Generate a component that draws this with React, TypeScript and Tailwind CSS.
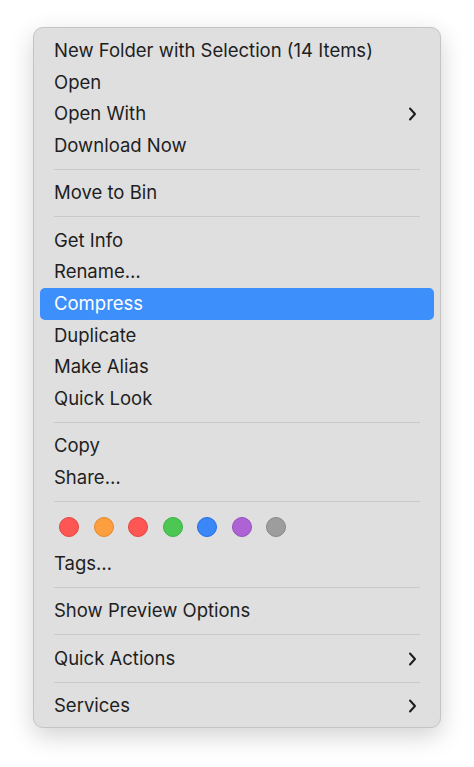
import React from "react";

type Item = { label: string; sub?: boolean; active?: boolean };

const Chevron = ({ white }: { white?: boolean }) => (
  <svg width="9" height="14" viewBox="0 0 9 14" className="absolute right-[17px] top-1/2 -translate-y-1/2">
    <path d="M2 1.5 L7 7 L2 12.5" fill="none" stroke={white ? "#fff" : "#1d1d1d"} strokeWidth="2" strokeLinecap="round" strokeLinejoin="round" />
  </svg>
);

const Row = ({ label, sub, active }: Item) => (
  <div
    className={
      "relative h-[31.6px] flex items-center pl-[14px] rounded-[5px] text-[18.5px] " +
      (active ? "bg-[#3d8ffb] text-white" : "text-[#1e1e1e]")
    }
  >
    <span>{label}</span>
    {sub && <Chevron white={active} />}
  </div>
);

const Sep = () => (
  <div className="h-[16px] flex items-center px-[14px]">
    <div className="h-px w-full bg-[#c9c9c9]" />
  </div>
);

const dots = [
  ["#fe5753", "#e0443f"],
  ["#fd9e3f", "#e8872a"],
  ["#fe5753", "#e0443f"],
  ["#4dc754", "#3bb043"],
  ["#3c87f7", "#1f6ee6"],
  ["#ad63d4", "#9650bd"],
  ["#9d9d9d", "#888888"],
];

export default function App() {
  return (
    <div className="min-h-screen bg-white pt-[27px] pl-[33px]" style={{ fontFamily: "Inter, 'Liberation Sans', sans-serif" }}>
      <div className="w-[408px] h-[701px] rounded-[10px] bg-[#dfdfdf] border border-[#c4c4c4] shadow-[0_8px_24px_rgba(0,0,0,0.18)] px-[6px] pt-[7px] pb-[5px]">
        <Row label="New Folder with Selection (14 Items)" />
        <Row label="Open" />
        <Row label="Open With" sub />
        <Row label="Download Now" />
        <Sep />
        <Row label="Move to Bin" />
        <Sep />
        <Row label="Get Info" />
        <Row label="Rename…" />
        <Row label="Compress" active />
        <Row label="Duplicate" />
        <Row label="Make Alias" />
        <Row label="Quick Look" />
        <Sep />
        <Row label="Copy" />
        <Row label="Share…" />
        <Sep />
        <div className="h-[38px] flex items-start pt-[7px] pl-[19px] gap-[14.5px]">
          {dots.map(([c, b], i) => (
            <div key={i} className="w-[20px] h-[20px] rounded-full border" style={{ backgroundColor: c, borderColor: b }} />
          ))}
        </div>
        <Row label="Tags…" />
        <Sep />
        <Row label="Show Preview Options" />
        <Sep />
        <Row label="Quick Actions" sub />
        <Sep />
        <Row label="Services" sub />
      </div>
    </div>
  );
}
